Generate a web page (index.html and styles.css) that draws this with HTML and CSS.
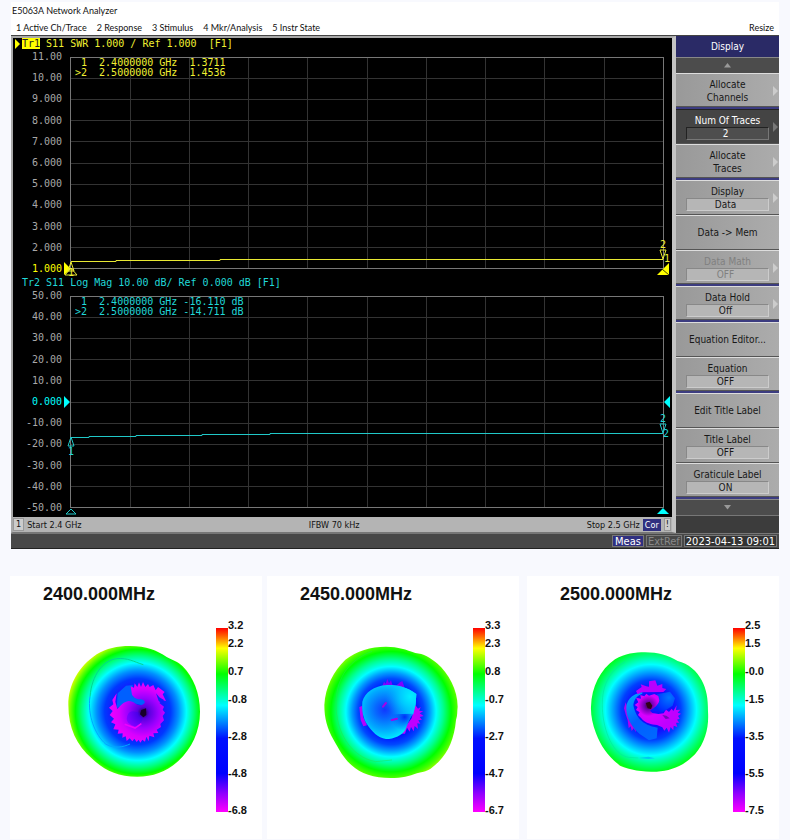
FILE: index.html
```html
<!DOCTYPE html>
<html lang="en">

<head>
    <meta charset="UTF-8">
    <meta name="viewport" content="width=device-width, initial-scale=1.0">
    <title>E5063A Network Analyzer</title>
    <link rel="stylesheet" href="styles.css">
</head>

<body>

    <main class="window">
        <div class="titlebar">E5063A Network Analyzer</div>
        <nav class="menu">
            <button>1 Active Ch/Trace</button>
            <button>2 Response</button>
            <button>3 Stimulus</button>
            <button>4 Mkr/Analysis</button>
            <button>5 Instr State</button>
            <button class="resize">Resize</button>
        </nav>

        <div class="workspace">
            <section class="channel">
                <div class="screen">
                    <div class="trace trace1">
                        <div class="trace-head"><span class="pointer"></span><span class="active">Tr1</span> S11 SWR 1.000 / Ref 1.000&nbsp; [F1]</div>
                        <div class="graph">
                            <ul class="axis">
                                <li>11.00</li>
                                <li>10.00</li>
                                <li>9.000</li>
                                <li>8.000</li>
                                <li>7.000</li>
                                <li>6.000</li>
                                <li>5.000</li>
                                <li>4.000</li>
                                <li>3.000</li>
                                <li>2.000</li>
                                <li class="ref">1.000</li>
                            </ul>
                            <div class="plot">
                                <svg viewBox="0 0 592 212" preserveAspectRatio="none">
                                    <path class="grid" d="M0 21.5H592M0 42.5H592M0 63.5H592M0 84.5H592M0 106.5H592M0 127.5H592M0 148.5H592M0 169.5H592M0 190.5H592M59.5 0V212M118.5 0V212M177.5 0V212M236.5 0V212M296.5 0V212M355.5 0V212M414.5 0V212M473.5 0V212M533.5 0V212" />
                                    <rect class="frame" x="-.5" y=".5" width="593" height="211" />
                                    <path class="line" d="M0 204.5H45V203.5H149V202.5H592" />
                                    <path class="solid" d="M-7 205V218L0 212Z" />
                                    <path class="line" d="M0 205L-3 214H3ZM-6 218L0 211L6 218Z" />
                                    <text x="-3" y="219">1</text>
                                    <text x="589" y="191">2</text>
                                    <path class="line" d="M589 193H595L592 202Z" />
                                    <text x="593" y="205">1</text>
                                    <path class="solid" d="M586 218L598 206V218Z" />
                                    <path class="cut" d="M591 212L598 218" />
                                </svg>
                                <pre class="readout"> 1  2.4000000 GHz  1.3711
&gt;2  2.5000000 GHz  1.4536</pre>
                            </div>
                        </div>
                    </div>

                    <div class="trace trace2">
                        <div class="trace-head">Tr2 S11 Log Mag 10.00 dB/ Ref 0.000 dB [F1]</div>
                        <div class="graph">
                            <ul class="axis">
                                <li>50.00</li>
                                <li>40.00</li>
                                <li>30.00</li>
                                <li>20.00</li>
                                <li>10.00</li>
                                <li class="ref">0.000</li>
                                <li>-10.00</li>
                                <li>-20.00</li>
                                <li>-30.00</li>
                                <li>-40.00</li>
                                <li>-50.00</li>
                            </ul>
                            <div class="plot">
                                <svg viewBox="0 0 592 212" preserveAspectRatio="none">
                                    <path class="grid" d="M0 21.5H592M0 42.5H592M0 63.5H592M0 84.5H592M0 106.5H592M0 127.5H592M0 148.5H592M0 169.5H592M0 190.5H592M59.5 0V212M118.5 0V212M177.5 0V212M236.5 0V212M296.5 0V212M355.5 0V212M414.5 0V212M473.5 0V212M533.5 0V212" />
                                    <rect class="frame" x="-.5" y=".5" width="593" height="211" />
                                    <path class="line" d="M0 141.5H18V140.5H65V139.5H131V138.5H199V137.5H592" />
                                    <path class="solid" d="M-7 100V112L-1 106ZM599 100V112L593 106Z" />
                                    <path class="line" d="M0 141L-3 150H3Z" />
                                    <text x="-3" y="159">1</text>
                                    <path class="line" d="M-5 218L0 213L5 218Z" />
                                    <text x="589" y="126">2</text>
                                    <path class="line" d="M589 128H595L592 137Z" />
                                    <text x="592" y="141">2</text>
                                    <path class="solid" d="M586 218L592 212L598 218Z" />
                                </svg>
                                <pre class="readout"> 1  2.4000000 GHz -16.110 dB
&gt;2  2.5000000 GHz -14.711 dB</pre>
                            </div>
                        </div>
                    </div>
                </div>
                <div class="sweep">
                    <span class="channel-no">1</span>
                    <span>Start 2.4 GHz</span>
                    <span class="ifbw">IFBW 70 kHz</span>
                    <span>Stop 2.5 GHz</span>
                    <span class="cor">Cor</span>
                    <span class="warn">!</span>
                </div>
            </section>

            <aside class="softkeys">
                <h2>Display</h2>
                <button class="scroll" aria-label="Scroll up"><svg viewBox="0 0 8 5"><path d="M0 5L4 0L8 5Z" /></svg></button>
                <button class="key more last">Allocate<br>Channels</button>
                <button class="key more selected">Num Of Traces<span class="value">2</span></button>
                <button class="key more last">Allocate<br>Traces</button>
                <button class="key more">Display<span class="value">Data</span></button>
                <button class="key">Data -&gt; Mem</button>
                <button class="key more last" disabled>Data Math<span class="value">OFF</span></button>
                <button class="key more last">Data Hold<span class="value">Off</span></button>
                <button class="key">Equation Editor...</button>
                <button class="key last">Equation<span class="value">OFF</span></button>
                <button class="key">Edit Title Label</button>
                <button class="key">Title Label<span class="value">OFF</span></button>
                <button class="key last">Graticule Label<span class="value">ON</span></button>
                <button class="scroll" aria-label="Scroll down"><svg viewBox="0 0 8 5"><path d="M0 0L4 5L8 0Z" /></svg></button>
                <div class="blank"></div>
            </aside>
        </div>

        <footer class="status">
            <span class="meas">Meas</span>
            <span class="extref">ExtRef</span>
            <time>2023-04-13 09:01</time>
        </footer>
    </main>

    <section class="patterns">
        <article class="pattern">
            <h3>2400.000MHz</h3>
            <div class="pattern-body">
                <svg viewBox="30 189 618 552">
                    <defs>
                        <radialGradient id="field1" gradientUnits="userSpaceOnUse" cx="413" cy="440" r="215">
                            <stop offset=".38" stop-color="#1020ff" />
                            <stop offset=".46" stop-color="#0038ff" />
                            <stop offset=".57" stop-color="#0090ff" />
                            <stop offset=".68" stop-color="#00ffff" />
                            <stop offset=".78" stop-color="#00ff80" />
                            <stop offset=".87" stop-color="#00ff00" />
                            <stop offset=".93" stop-color="#60ff00" />
                            <stop offset="1" stop-color="#e0ff00" />
                        </radialGradient>
                        <radialGradient id="core1" gradientUnits="userSpaceOnUse" cx="430" cy="443" r="90">
                            <stop offset="0" stop-color="#200040" />
                            <stop offset=".2" stop-color="#5a00e0" />
                            <stop offset=".5" stop-color="#9a00ff" />
                            <stop offset=".8" stop-color="#d800ff" />
                            <stop offset="1" stop-color="#e800ff" />
                        </radialGradient>
                    </defs>
                    <path fill="url(#field1)" d="M390 243C440 243 470 256 500 276C515 284 535 290 548 304C580 336 600 385 600 440C600 500 575 550 535 588C500 620 460 635 412 635C350 635 312 615 275 580C230 540 205 490 205 420C205 360 235 305 290 268C320 250 350 243 390 243Z" />
                    <path fill="none" stroke="#00d890" stroke-width="3" d="M270 395C275 330 310 285 350 281C385 278 400 290 430 299" />
                    <path fill="none" stroke="#00a8ff" stroke-width="3" d="M270 395C262 450 285 510 318 538C345 552 370 546 390 537" />
                    <path fill="#0060ff" d="M350 430L353 385L378 362L398 360L400 395L440 400L435 422L385 412Z" />
                    <path fill="url(#core1)" d="M350 385L346 410L352 432C360 424 370 410 386 408C405 408 410 425 425 420C440 415 436 404 420 403C405 402 400 395 396 389L392 364L402 368L404 355L412 366L417 352L423 366L429 351L436 366L444 357L449 366L460 360L467 376L474 366L494 381L488 388L498 408L488 406L478 414L492 425L488 434L495 443L488 453L492 466L481 477L483 486L470 494L475 504L460 505L463 517L448 512L446 529L439 515L435 530L427 524L421 533L416 524L410 531L403 521L397 529L389 520L380 528L377 514L367 518L368 505L353 506L356 494L340 493L346 478L333 472L342 461L329 450L338 438L327 428L340 418L337 405Z" />
                    <path fill="#1020ff" d="M468 385L478 397L492 405L484 414L476 408Z" />
                    <path fill="none" stroke="#f000ff" stroke-width="5" d="M374 478L405 489L424 476" />
                    <path fill="#2a00ff" opacity=".3" d="M382 452C390 430 408 442 420 443C435 460 425 474 408 485C390 480 375 470 382 452Z" />
                    <path fill="#18002a" d="M424 435L438 430L439 450L430 457L420 448Z" />
                </svg>
                <div class="bar"></div>
                <ul class="scale">
                    <li>3.2</li>
                    <li>2.2</li>
                    <li>0.7</li>
                    <li>-0.8</li>
                    <li>-2.8</li>
                    <li>-4.8</li>
                    <li>-6.8</li>
                </ul>
            </div>
        </article>

        <article class="pattern">
            <h3>2450.000MHz</h3>
            <div class="pattern-body">
                <svg viewBox="15 189 618 552">
                    <defs>
                        <radialGradient id="field2" gradientUnits="userSpaceOnUse" cx="387" cy="440" r="215">
                            <stop offset=".36" stop-color="#0018ff" />
                            <stop offset=".46" stop-color="#0048ff" />
                            <stop offset=".54" stop-color="#0098ff" />
                            <stop offset=".63" stop-color="#00ffff" />
                            <stop offset=".73" stop-color="#00ff90" />
                            <stop offset=".84" stop-color="#00ff00" />
                            <stop offset=".92" stop-color="#48ff00" />
                            <stop offset="1" stop-color="#b8ff00" />
                        </radialGradient>
                        <radialGradient id="core2" gradientUnits="userSpaceOnUse" cx="368" cy="434" r="92">
                            <stop offset="0" stop-color="#1038ff" />
                            <stop offset=".3" stop-color="#0868ff" />
                            <stop offset=".65" stop-color="#00a8ff" />
                            <stop offset="1" stop-color="#00f0ff" />
                        </radialGradient>
                        <radialGradient id="lobe2" gradientUnits="userSpaceOnUse" cx="445" cy="395" r="75">
                            <stop offset="0" stop-color="#00f0ff" />
                            <stop offset=".4" stop-color="#00d0ff" stop-opacity=".8" />
                            <stop offset="1" stop-color="#00a0ff" stop-opacity="0" />
                        </radialGradient>
                        <radialGradient id="dip2" gradientUnits="userSpaceOnUse" cx="428" cy="456" r="42">
                            <stop offset="0" stop-color="#0020f8" stop-opacity=".9" />
                            <stop offset="1" stop-color="#0060ff" stop-opacity="0" />
                        </radialGradient>
                    </defs>
                    <path fill="url(#field2)" d="M372 245C410 245 432 254 460 264C485 266 505 278 525 295C560 325 587 375 587 425C585 440 587 450 582 465C577 520 560 560 530 590C512 608 500 617 485 620C455 625 440 636 410 638C350 643 300 630 268 600C245 580 232 555 215 525C195 490 187 460 187 420C190 365 215 318 250 284C285 258 325 245 372 245Z" />
                    <path fill="none" stroke="#20e850" stroke-width="3" opacity=".5" d="M330 259C250 290 222 350 222 420C222 500 265 575 340 590L390 585" />
                    <path fill="#8000ff" d="M360 366L366 350L371 356L376 342L381 355L387 346L391 359L404 361L414 352L421 348L427 366Z" />
                    <path fill="#b800ff" d="M292 426L302 422L303 455L315 481L304 484L296 465Z" />
                    <path fill="#c000ff" d="M460 420L468 431L476 426L472 437L484 439L473 445L485 453L473 456L480 464L469 466L475 476L466 475L468 492L458 483L455 499L447 486L443 500L435 488L429 506L420 506L434 480L449 460Z" />
                    <g id="inner2">
                        <path fill="url(#core2)" d="M375 360C405 359 435 366 463 387L461 418L454 446C443 456 438 475 430 494C422 510 396 522 372 522C347 519 330 500 315 478C303 458 299 438 301 410C309 382 335 363 375 360Z" />
                        <path fill="url(#lobe2)" d="M375 360C405 359 435 366 463 387L461 418L454 446C443 456 438 475 430 494C422 510 396 522 372 522C347 519 330 500 315 478C303 458 299 438 301 410C309 382 335 363 375 360Z" />
                        <path fill="url(#dip2)" d="M388 448L454 446C443 456 438 475 430 494L388 498Z" />
                    </g>
                    <path stroke="#a800e8" stroke-width="6" stroke-linecap="round" d="M363 425L372 414M389 465L405 461" />
                </svg>
                <div class="bar"></div>
                <ul class="scale">
                    <li>3.3</li>
                    <li>2.3</li>
                    <li>0.8</li>
                    <li>-0.7</li>
                    <li>-2.7</li>
                    <li>-4.7</li>
                    <li>-6.7</li>
                </ul>
            </div>
        </article>

        <article class="pattern">
            <h3>2500.000MHz</h3>
            <div class="pattern-body">
                <svg viewBox="6 189 618 552">
                    <defs>
                        <radialGradient id="field3" gradientUnits="userSpaceOnUse" cx="378" cy="435" r="195">
                            <stop offset=".34" stop-color="#1010ff" />
                            <stop offset=".46" stop-color="#0040ff" />
                            <stop offset=".57" stop-color="#0098ff" />
                            <stop offset=".7" stop-color="#00ffff" />
                            <stop offset=".83" stop-color="#00ff88" />
                            <stop offset=".95" stop-color="#00ff20" />
                            <stop offset="1" stop-color="#30ff00" />
                        </radialGradient>
                        <radialGradient id="core3" gradientUnits="userSpaceOnUse" cx="370" cy="422" r="75">
                            <stop offset="0" stop-color="#400030" />
                            <stop offset=".16" stop-color="#7000b0" />
                            <stop offset=".42" stop-color="#d800ff" />
                            <stop offset="1" stop-color="#c000ff" />
                        </radialGradient>
                        <linearGradient id="arm3" gradientUnits="userSpaceOnUse" x1="304" y1="400" x2="390" y2="520">
                            <stop offset="0" stop-color="#00a0ff" />
                            <stop offset=".5" stop-color="#0060ff" />
                            <stop offset="1" stop-color="#0068ff" />
                        </linearGradient>
                        <radialGradient id="lobe3" gradientUnits="userSpaceOnUse" cx="432" cy="398" r="50">
                            <stop offset="0" stop-color="#0078ff" />
                            <stop offset="1" stop-color="#0020ff" />
                        </radialGradient>
                    </defs>
                    <path fill="url(#field3)" d="M360 262C400 262 430 272 458 288C490 296 516 318 530 346C545 375 549 400 549 440C552 485 542 530 510 568C475 603 440 617 395 620C350 620 315 615 285 602C250 575 228 545 213 505C202 475 197 450 198 425C200 365 225 315 270 283C300 266 330 262 360 262Z" />
                    <path fill="none" stroke="#00e8a0" stroke-width="3" opacity=".6" d="M300 290C245 325 230 370 232 430C235 500 265 570 310 577L340 579" />
                    <path fill="#00c8f0" d="M340 579L370 575L390 580L370 582Z" />
                    <path fill="#b000f0" d="M302 412L297 430L302 448L308 466L311 490L317 484L320 498L326 490L333 502L330 482L320 462L312 440Z" />
                    <path fill="url(#arm3)" d="M352 381C318 388 302 408 304 435C306 465 325 490 345 508L372 526L395 520L398 488C350 480 332 455 325 420C328 400 338 391 352 386Z" />
                    <path fill="url(#lobe3)" d="M396 388L435 380L450 400L443 422L412 442L380 436Z" />
                    <path fill="#b800ff" d="M333 378L350 366L347 358L364 364L372 365L372 349L391 346L397 362L412 357L412 369L424 372L415 381L350 382L338 388Z" />
                    <path fill="url(#core3)" d="M333 398L348 401L346 390L358 394L364 386L372 392L388 387L400 393L403 406C400 420 389 429 375 437L382 444L400 447L416 445L423 434L432 441L440 431L445 438L455 421L453 435L466 434L458 443L468 446L459 453L464 461L456 464L463 473L453 473L457 486L446 482L445 496L437 486L432 503L425 488L418 497L412 487L396 480C380 480 360 474 349 460L339 450L344 442L333 435L338 426L329 420L340 412Z" />
                    <path fill="#301090" opacity=".6" d="M412 450L424 452L434 460L422 462Z" />
                    <path fill="#300018" d="M362 414L374 410L382 422L378 432L368 430Z" />
                </svg>
                <div class="bar"></div>
                <ul class="scale">
                    <li>2.5</li>
                    <li>1.5</li>
                    <li>-0.0</li>
                    <li>-1.5</li>
                    <li>-3.5</li>
                    <li>-5.5</li>
                    <li>-7.5</li>
                </ul>
            </div>
        </article>
    </section>

</body>

</html>
```
FILE: styles.css
```css
* {
    box-sizing: border-box;
}

body {
    background: #f8f9fe;
    font-family: "DejaVu Sans Condensed", "Open Sans", sans-serif;
    margin: 0;
    padding: 2px 11px 0;
}

button {
    font: inherit;
    color: inherit;
    background: none;
    border: none;
    padding: 0;
    cursor: pointer;
}

ul {
    list-style: none;
    margin: 0;
    padding: 0;
}

.window {
    background: white;
    color: #111;
}

.titlebar {
    font: 9px/17px Lato, sans-serif;
    padding-left: 1px;
}

.menu {
    display: flex;
    gap: 10px;
    height: 16px;
    padding: 0 5px;
    font: 9px/15px Lato, sans-serif;
}

.menu .resize {
    margin-left: auto;
}

.workspace {
    display: flex;
    background: #333;
    border-top: 1px solid #444;
}

/* channel window */
.channel {
    flex: 1;
    border: 2px solid #a8a8a8;
    border-right: 4px solid #c4c4c4;
    border-bottom: 1px solid #777;
}

.screen {
    background: black;
    padding-bottom: 9px;
    font: 10px/11px "DejaVu Sans Mono", monospace;
}

.trace1 {
    color: #f0f032;
    stroke: #e8e832;
}

.trace2 {
    color: #20d8d8;
    stroke: #20c8c8;
    padding-top: 8px;
}

.trace-head {
    position: relative;
    padding-left: 9px;
    margin-bottom: 8px;
}

.pointer {
    position: absolute;
    left: 2px;
    top: 1px;
    border-left: 5px solid yellow;
    border-top: 5px solid transparent;
    border-bottom: 5px solid transparent;
}

.active {
    background: yellow;
    color: #222;
}

.graph {
    display: flex;
    gap: 9px;
    padding-right: 9px;
}

.axis {
    display: flex;
    flex-direction: column;
    justify-content: space-between;
    width: 49px;
    margin: -6px 0;
    line-height: 12px;
    text-align: right;
    color: #a8a8a8;
}

.trace1 .ref {
    color: yellow;
}

.trace2 .ref {
    color: cyan;
}

.plot {
    position: relative;
    flex: 1;
    height: 212px;
}

.plot svg {
    display: block;
    width: 100%;
    height: 100%;
    overflow: visible;
}

.plot path,
.plot rect {
    fill: none;
}

.plot .grid {
    stroke: #333;
}

.plot .frame {
    stroke: #777;
}

.plot text {
    fill: currentColor;
    stroke: none;
}

.trace1 .solid {
    fill: yellow;
    stroke: none;
}

.trace2 .solid {
    fill: cyan;
    stroke: none;
}

.plot .cut {
    stroke: #444400;
}

.readout {
    position: absolute;
    left: 4px;
    top: 1px;
    margin: 0;
    font: 10px/10px "DejaVu Sans Mono", monospace;
}

.sweep {
    display: flex;
    align-items: center;
    gap: 3px;
    height: 15px;
    padding-right: 1px;
    background: #b4b4b4;
    font-size: 9px;
    line-height: 12px;
}

.channel-no,
.warn {
    padding: 0 2px;
    background: #ccc;
    border: 1px solid #999;
    line-height: 11px;
}

.warn {
    padding: 0 1px;
}

.ifbw {
    margin: 0 auto;
}

.cor {
    padding: 0 2px;
    background: #303080;
    color: white;
}

/* softkey menu */
.softkeys {
    display: flex;
    flex-direction: column;
    width: 103px;
    font-size: 10px;
    line-height: 13px;
    color: #181818;
}

.softkeys h2 {
    height: 21px;
    margin: 0;
    background: #2a2a66;
    color: white;
    font-size: 10px;
    font-weight: normal;
    line-height: 21px;
    text-align: center;
}

.scroll {
    display: flex;
    align-items: center;
    justify-content: center;
    height: 16px;
    border-top: 1px solid #888;
    background: #4c4c4c;
}

.scroll svg {
    width: 7px;
    fill: #999;
}

.key {
    position: relative;
    flex: 1;
    min-height: 35px;
    background: linear-gradient(to right, #999, #acacac);
    border-top: 1px solid #ddd;
    border-bottom: 1px solid #555;
}

.key.last {
    border-bottom: 2px solid #3c3c80;
    box-shadow: inset 0 -1px #555;
}

.key.selected {
    background: #444;
    color: white;
    border-top-color: #222;
}

.key:disabled {
    color: #808080;
}

.value {
    display: block;
    height: 13px;
    margin: 0 10px;
    padding-right: 4px;
    background: #b6b6b6;
    border: 1px solid;
    border-color: #888 #ccc #ccc #888;
    line-height: 11px;
}

.selected .value {
    background: #4e4e4e;
    border-color: #222 #777 #777 #222;
}

.more::after {
    content: "";
    position: absolute;
    right: 1px;
    top: 12px;
    border-left: 5px solid #ccc;
    border-top: 5px solid transparent;
    border-bottom: 5px solid transparent;
}

.selected::after {
    border-left-color: #777;
}

.blank {
    height: 18px;
    background: #3c3c3c;
    border-top: 1px solid #777;
}

.status {
    display: flex;
    justify-content: flex-end;
    gap: 2px;
    height: 16px;
    padding: 1px 2px;
    background: #484848;
    border-top: 1px solid #777;
    border-bottom: 1px solid #222;
    color: white;
    font-size: 11px;
    line-height: 11px;
}

.status > * {
    padding: 0 1px;
    border: 1px solid #777;
}

.status .meas {
    padding: 0 2px;
    background: #303080;
}

.status .extref {
    color: #888;
}

.status time {
    background: #333;
}

/* radiation patterns */
.patterns {
    display: flex;
    gap: 5px;
    margin: 27px 0 0 -1px;
}

.pattern {
    flex: 1;
    height: 263px;
    background: white;
    color: #111;
    font-family: "Liberation Sans", Arial, sans-serif;
}

.pattern:last-child {
    margin-left: 3px;
}

.pattern h3 {
    margin: 0 0 24px;
    padding: 8px 0 0 33px;
    font-size: 18px;
    line-height: 20px;
}

.pattern-body {
    display: flex;
    height: 184px;
}

.pattern-body svg {
    flex: 1;
    min-width: 0;
}

.bar {
    width: 12px;
    background: linear-gradient(to bottom, red, #ff7000 5%, yellow 11%, lime 25%, cyan 42%, #0010ff 60%, blue 79%, #9000ff 90%, magenta);
}

.scale {
    display: grid;
    grid-template-rows: 18px 28px 28px 37px 37px 37px 14px;
    width: 34px;
    margin-top: -10px;
    font-size: 11px;
    font-weight: bold;
    line-height: 14px;
}
```
